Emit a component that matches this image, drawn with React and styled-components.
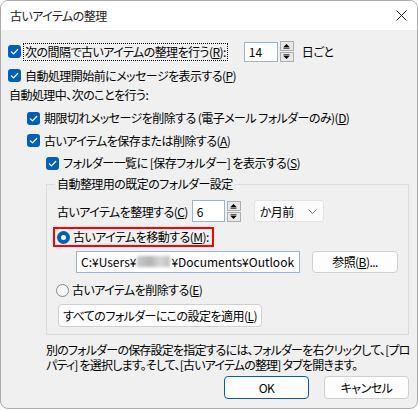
import React from 'react';
import styled, { createGlobalStyle } from 'styled-components';

const GlobalStyle = createGlobalStyle`
  body {
    margin: 0;
    background: #ffffff;
  }
  * {
    box-sizing: border-box;
  }
`;

const Window = styled.div`
  width: 418px;
  height: 409px;
  border: 1px solid #acacac;
  border-radius: 8px;
  overflow: hidden;
  display: flex;
  flex-direction: column;
  background: #f0f0f0;
  font-family: "Noto Sans CJK JP", "Noto Sans", sans-serif;
  font-size: 12px;
  font-feature-settings: "palt";
  letter-spacing: -0.55px;
  color: #000;
`;

const TitleBar = styled.div`
  height: 29px;
  flex-shrink: 0;
  background: #ffffff;
  display: flex;
  align-items: center;
  justify-content: space-between;
  padding: 0 10px 0 9px;
`;

const Title = styled.div`
  font-size: 12px;
  color: #1b1b1b;
`;

const Body = styled.div`
  flex: 1;
  display: flex;
  flex-direction: column;
  padding: 11px 8px 0 7px;
`;

const Row = styled.div`
  display: flex;
  align-items: center;
  height: ${p => p.$h || 20}px;
  margin-top: ${p => p.$mt || 0}px;
  padding-left: ${p => p.$indent || 0}px;
  white-space: nowrap;
`;

const CheckBox = styled.span`
  width: 13px;
  height: 13px;
  border-radius: 3px;
  background: #005fb8;
  display: inline-flex;
  align-items: center;
  justify-content: center;
  flex-shrink: 0;
`;

const Label = styled.span`
  margin-left: ${p => p.$ml ?? 4}px;
  line-height: 16px;
`;

const FocusLabel = styled.span`
  margin-left: 2px;
  padding: 0 1px;
  border: 1px dotted #000;
  line-height: 16px;
`;

const TextInput = styled.div`
  width: ${p => p.$w}px;
  height: ${p => p.$h || 20}px;
  margin-left: ${p => p.$ml || 0}px;
  background: #fff;
  border: 1px solid #99b4d1;
  display: flex;
  align-items: center;
  padding-left: 4px;
  overflow: hidden;
  font-feature-settings: normal;
  letter-spacing: 0;
  flex-shrink: 0;
`;

const Spin = styled.div`
  width: 14px;
  height: 21px;
  margin-left: 2px;
  display: flex;
  flex-direction: column;
  gap: 1px;
`;

const SpinBtn = styled.div`
  flex: 1;
  border: 1px solid #adadad;
  background: #e8e8e8;
  display: flex;
  align-items: center;
  justify-content: center;
`;

const Suffix = styled.span`
  margin-left: 8px;
`;

const Group = styled.fieldset`
  margin: 4px 0 0 38px;
  padding: 0 8px 7px 6px;
  border: 1px solid #dcdcdc;
  min-width: 0;
`;

const Legend = styled.legend`
  margin-left: 2px;
  padding: 0 2px;
  line-height: 14px;
`;

const Select = styled.div`
  width: 70px;
  height: 22px;
  margin-left: 13px;
  background: #fbfbfb;
  border: 1px solid #e3e3e3;
  border-radius: 3px;
  display: flex;
  align-items: center;
  justify-content: space-between;
  padding: 0 6px 0 5px;
`;

const Highlight = styled.div`
  display: inline-flex;
  align-items: center;
  height: 20px;
  margin-top: 5px;
  padding: 0 3px 0 2px;
  border: 2px solid #ff0000;
  align-self: flex-start;
  white-space: nowrap;
`;

const Radio = styled.span`
  width: 13px;
  height: 13px;
  border-radius: 50%;
  flex-shrink: 0;
  display: inline-flex;
  align-items: center;
  justify-content: center;
  background: ${p => (p.$checked ? '#005fb8' : '#f7f7f7')};
  border: ${p => (p.$checked ? 'none' : '1px solid #858585')};
  &::after {
    content: '';
    display: ${p => (p.$checked ? 'block' : 'none')};
    width: 5px;
    height: 5px;
    border-radius: 50%;
    background: #fff;
  }
`;

const Button = styled.div`
  width: ${p => p.$w}px;
  height: ${p => p.$h || 23}px;
  margin-left: ${p => p.$ml || 0}px;
  background: #fdfdfd;
  border: 1px solid ${p => (p.$primary ? '#005fb8' : '#d0d0d0')};
  border-radius: 4px;
  display: flex;
  align-items: center;
  justify-content: center;
  flex-shrink: 0;
  white-space: nowrap;
`;

const Blurred = styled.span`
  display: inline-block;
  width: 33px;
  height: 11px;
  margin: 0 1px;
  background: linear-gradient(90deg, #c9c9c9, #b3b3b3 40%, #d6d6d6 70%, #bdbdbd);
  filter: blur(1.5px);
`;

const Note = styled.div`
  margin: 8px 0 0 38px;
  line-height: 14.5px;
  letter-spacing: -0.8px;
  white-space: nowrap;
`;

const Footer = styled.div`
  display: flex;
  justify-content: flex-end;
  gap: 15px;
  margin-top: 4px;
`;

const Check = () => (
  <CheckBox>
    <svg width="13" height="13" viewBox="0 0 13 13">
      <polyline points="3.4,6.9 5.5,8.9 9.7,4.5" fill="none" stroke="#fff" strokeWidth="1.3" strokeLinecap="round" strokeLinejoin="round" />
    </svg>
  </CheckBox>
);

const Spinner = () => (
  <Spin>
    <SpinBtn>
      <svg width="7" height="6" viewBox="0 0 7 6">
        <polygon points="0.5,4 3.5,1 6.5,4" fill="#000" />
        <rect x="0.5" y="4.6" width="6" height="1" fill="#000" />
      </svg>
    </SpinBtn>
    <SpinBtn>
      <svg width="7" height="6" viewBox="0 0 7 6">
        <rect x="0.5" y="0.4" width="6" height="1" fill="#000" />
        <polygon points="0.5,2 3.5,5 6.5,2" fill="#000" />
      </svg>
    </SpinBtn>
  </Spin>
);

export default function App() {
  return (
    <>
      <GlobalStyle />
      <Window>
        <TitleBar>
          <Title>古いアイテムの整理</Title>
          <svg width="11" height="11" viewBox="0 0 11 11">
            <path d="M0.5 0.5 L10.5 10.5 M10.5 0.5 L0.5 10.5" stroke="#1b1b1b" strokeWidth="1" />
          </svg>
        </TitleBar>
        <Body>
          <Row $h={21}>
            <Check />
            <FocusLabel>次の間隔で古いアイテムの整理を行う(<u>R</u>):</FocusLabel>
            <TextInput $w={34} $ml={16}>14</TextInput>
            <Spinner />
            <Suffix>日ごと</Suffix>
          </Row>
          <Row $h={21} $mt={3}>
            <Check />
            <Label>自動処理開始前にメッセージを表示する(<u>P</u>)</Label>
          </Row>
          <Row $h={18}>
            <Label $ml={1}>自動処理中、次のことを行う:</Label>
          </Row>
          <Row $mt={4} $indent={19}>
            <Check />
            <Label>期限切れメッセージを削除する (電子メール フォルダーのみ)(<u>D</u>)</Label>
          </Row>
          <Row $h={21} $mt={2} $indent={19}>
            <Check />
            <Label>古いアイテムを保存または削除する(<u>A</u>)</Label>
          </Row>
          <Row $mt={2} $indent={38}>
            <Check />
            <Label>フォルダー一覧に [保存フォルダー] を表示する(<u>S</u>)</Label>
          </Row>
          <Group>
            <Legend>自動整理用の既定のフォルダー設定</Legend>
            <Row $h={22} $mt={9} $indent={4}>
              <span>古いアイテムを整理する(<u>C</u>)</span>
              <TextInput $w={33} $h={22} $ml={4}>6</TextInput>
              <Spinner />
              <Select>
                <span>か月前</span>
                <svg width="9" height="5" viewBox="0 0 9 5">
                  <polyline points="0.5,0.5 4.5,4.5 8.5,0.5" fill="none" stroke="#6b6b6b" strokeWidth="1" />
                </svg>
              </Select>
            </Row>
            <Highlight>
              <Radio $checked />
              <Label $ml={3}>古いアイテムを移動する(<u>M</u>):</Label>
            </Highlight>
            <Row $h={23} $mt={3} $indent={23}>
              <TextInput $w={224} $h={22}>
                C:¥Users¥<Blurred />¥Documents¥Outlook
              </TextInput>
              <Button $w={86} $h={22} $ml={12}>参照(<u>B</u>)...</Button>
            </Row>
            <Row $mt={7} $indent={3}>
              <Radio />
              <Label $ml={3}>古いアイテムを削除する(<u>E</u>)</Label>
            </Row>
            <Row $h={23} $mt={4} $indent={5}>
              <Button $w={204}>すべてのフォルダーにこの設定を適用(<u>L</u>)</Button>
            </Row>
          </Group>
          <Note>
            別のフォルダーの保存設定を指定するには、フォルダーを右クリックして、[プロ
            <br />
            パティ] を選択します。そして、[古いアイテムの整理] タブを開きます。
          </Note>
          <Footer>
            <Button $w={85} $primary>OK</Button>
            <Button $w={85}>キャンセル</Button>
          </Footer>
        </Body>
      </Window>
    </>
  );
}
